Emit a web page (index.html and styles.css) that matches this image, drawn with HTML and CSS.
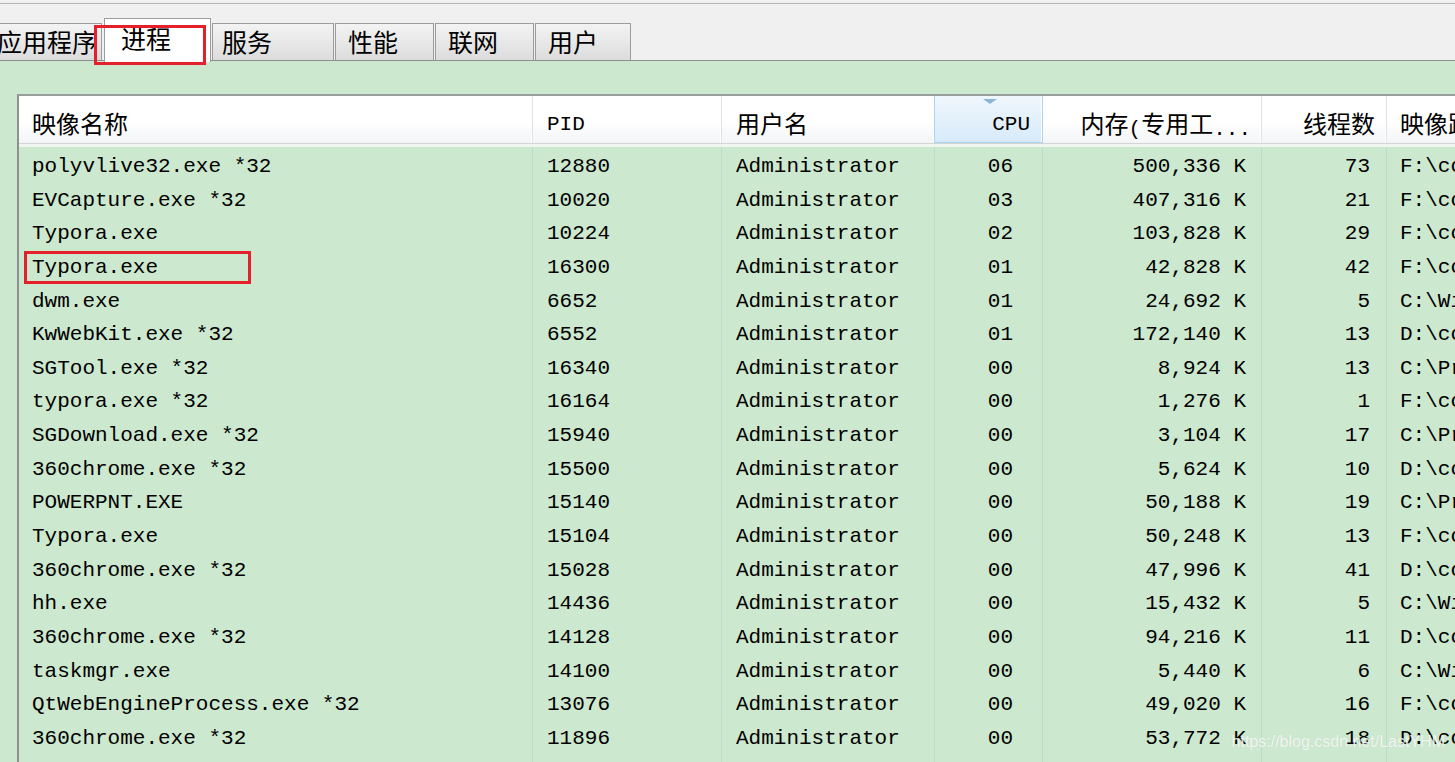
FILE: index.html
```html
<!DOCTYPE html>
<html lang="zh-CN">
<head>
<meta charset="utf-8">
<title>Windows 任务管理器 - 进程</title>
<link rel="stylesheet" href="styles.css">
</head>
<body>
<div class="window">
  <div class="tabbar">
    <div class="tab tab-apps">应用程序</div>
    <div class="tab tab-active">进程</div>
    <div class="tab tab-services">服务</div>
    <div class="tab tab-perf">性能</div>
    <div class="tab tab-net">联网</div>
    <div class="tab tab-users">用户</div>
  </div>
  <div class="panel">
    <div class="list">
      <div class="row head">
        <div class="cell c-name"><span class="cjk">映像名称</span></div>
        <div class="cell c-pid"><span class="lat">PID</span></div>
        <div class="cell c-user"><span class="cjk">用户名</span></div>
        <div class="cell c-cpu sorted"><span class="lat">CPU</span></div>
        <div class="cell c-mem"><span class="cjk">内存</span><span class="lat">(</span><span class="cjk">专用工</span><span class="lat">...</span></div>
        <div class="cell c-thr"><span class="cjk">线程数</span></div>
        <div class="cell c-path"><span class="cjk">映像路径名称</span></div>
      </div>
      <div class="row"><div class="cell c-name">polyvlive32.exe *32</div><div class="cell c-pid">12880</div><div class="cell c-user">Administrator</div><div class="cell c-cpu">06</div><div class="cell c-mem">500,336 K</div><div class="cell c-thr">73</div><div class="cell c-path">F:\codeSoftware\polyv\polyvlive32.exe</div></div>
      <div class="row"><div class="cell c-name">EVCapture.exe *32</div><div class="cell c-pid">10020</div><div class="cell c-user">Administrator</div><div class="cell c-cpu">03</div><div class="cell c-mem">407,316 K</div><div class="cell c-thr">21</div><div class="cell c-path">F:\codeSoftware\EVCapture\EVCapture.exe</div></div>
      <div class="row"><div class="cell c-name">Typora.exe</div><div class="cell c-pid">10224</div><div class="cell c-user">Administrator</div><div class="cell c-cpu">02</div><div class="cell c-mem">103,828 K</div><div class="cell c-thr">29</div><div class="cell c-path">F:\codeSoftware\Typora\Typora.exe</div></div>
      <div class="row marked"><div class="cell c-name">Typora.exe</div><div class="cell c-pid">16300</div><div class="cell c-user">Administrator</div><div class="cell c-cpu">01</div><div class="cell c-mem">42,828 K</div><div class="cell c-thr">42</div><div class="cell c-path">F:\codeSoftware\Typora\Typora.exe</div></div>
      <div class="row"><div class="cell c-name">dwm.exe</div><div class="cell c-pid">6652</div><div class="cell c-user">Administrator</div><div class="cell c-cpu">01</div><div class="cell c-mem">24,692 K</div><div class="cell c-thr">5</div><div class="cell c-path">C:\Windows\System32\dwm.exe</div></div>
      <div class="row"><div class="cell c-name">KwWebKit.exe *32</div><div class="cell c-pid">6552</div><div class="cell c-user">Administrator</div><div class="cell c-cpu">01</div><div class="cell c-mem">172,140 K</div><div class="cell c-thr">13</div><div class="cell c-path">D:\codeSoftware\KwMusic\KwWebKit.exe</div></div>
      <div class="row"><div class="cell c-name">SGTool.exe *32</div><div class="cell c-pid">16340</div><div class="cell c-user">Administrator</div><div class="cell c-cpu">00</div><div class="cell c-mem">8,924 K</div><div class="cell c-thr">13</div><div class="cell c-path">C:\Program Files (x86)\SogouInput\SGTool.exe</div></div>
      <div class="row"><div class="cell c-name">typora.exe *32</div><div class="cell c-pid">16164</div><div class="cell c-user">Administrator</div><div class="cell c-cpu">00</div><div class="cell c-mem">1,276 K</div><div class="cell c-thr">1</div><div class="cell c-path">F:\codeSoftware\Typora\typora.exe</div></div>
      <div class="row"><div class="cell c-name">SGDownload.exe *32</div><div class="cell c-pid">15940</div><div class="cell c-user">Administrator</div><div class="cell c-cpu">00</div><div class="cell c-mem">3,104 K</div><div class="cell c-thr">17</div><div class="cell c-path">C:\Program Files (x86)\SogouInput\SGDownload.exe</div></div>
      <div class="row"><div class="cell c-name">360chrome.exe *32</div><div class="cell c-pid">15500</div><div class="cell c-user">Administrator</div><div class="cell c-cpu">00</div><div class="cell c-mem">5,624 K</div><div class="cell c-thr">10</div><div class="cell c-path">D:\codeSoftware\360Chrome\360chrome.exe</div></div>
      <div class="row"><div class="cell c-name">POWERPNT.EXE</div><div class="cell c-pid">15140</div><div class="cell c-user">Administrator</div><div class="cell c-cpu">00</div><div class="cell c-mem">50,188 K</div><div class="cell c-thr">19</div><div class="cell c-path">C:\Program Files\Microsoft Office\POWERPNT.EXE</div></div>
      <div class="row"><div class="cell c-name">Typora.exe</div><div class="cell c-pid">15104</div><div class="cell c-user">Administrator</div><div class="cell c-cpu">00</div><div class="cell c-mem">50,248 K</div><div class="cell c-thr">13</div><div class="cell c-path">F:\codeSoftware\Typora\Typora.exe</div></div>
      <div class="row"><div class="cell c-name">360chrome.exe *32</div><div class="cell c-pid">15028</div><div class="cell c-user">Administrator</div><div class="cell c-cpu">00</div><div class="cell c-mem">47,996 K</div><div class="cell c-thr">41</div><div class="cell c-path">D:\codeSoftware\360Chrome\360chrome.exe</div></div>
      <div class="row"><div class="cell c-name">hh.exe</div><div class="cell c-pid">14436</div><div class="cell c-user">Administrator</div><div class="cell c-cpu">00</div><div class="cell c-mem">15,432 K</div><div class="cell c-thr">5</div><div class="cell c-path">C:\Windows\hh.exe</div></div>
      <div class="row"><div class="cell c-name">360chrome.exe *32</div><div class="cell c-pid">14128</div><div class="cell c-user">Administrator</div><div class="cell c-cpu">00</div><div class="cell c-mem">94,216 K</div><div class="cell c-thr">11</div><div class="cell c-path">D:\codeSoftware\360Chrome\360chrome.exe</div></div>
      <div class="row"><div class="cell c-name">taskmgr.exe</div><div class="cell c-pid">14100</div><div class="cell c-user">Administrator</div><div class="cell c-cpu">00</div><div class="cell c-mem">5,440 K</div><div class="cell c-thr">6</div><div class="cell c-path">C:\Windows\System32\taskmgr.exe</div></div>
      <div class="row"><div class="cell c-name">QtWebEngineProcess.exe *32</div><div class="cell c-pid">13076</div><div class="cell c-user">Administrator</div><div class="cell c-cpu">00</div><div class="cell c-mem">49,020 K</div><div class="cell c-thr">16</div><div class="cell c-path">F:\codeSoftware\Qt\QtWebEngineProcess.exe</div></div>
      <div class="row"><div class="cell c-name">360chrome.exe *32</div><div class="cell c-pid">11896</div><div class="cell c-user">Administrator</div><div class="cell c-cpu">00</div><div class="cell c-mem">53,772 K</div><div class="cell c-thr">18</div><div class="cell c-path">D:\codeSoftware\360Chrome\360chrome.exe</div></div>
      <div class="row"><div class="cell c-name">360chrome.exe *32</div><div class="cell c-pid">11816</div><div class="cell c-user">Administrator</div><div class="cell c-cpu">00</div><div class="cell c-mem">46,840 K</div><div class="cell c-thr">18</div><div class="cell c-path">D:\codeSoftware\360Chrome\360chrome.exe</div></div>
    </div>
  </div>
  <div class="watermark">https://blog.csdn.net/LastYHM</div>
</div>
</body>
</html>
```
FILE: styles.css
```css
html, body {
  margin: 0;
  padding: 0;
  height: 100%;
  overflow: hidden;
  background: #f0f0f0;
}

.window {
  position: relative;
  height: 762px;
  display: flex;
  flex-direction: column;
  overflow: hidden;
}

/* ---------- tabs ---------- */
.tabbar {
  flex: none;
  margin-top: 3px;
  height: 56px;
  border-top: 1px solid #b4b6bc;
  border-bottom: 1px solid #8e8f90;
  background: #f0f0f0;
  display: flex;
  align-items: flex-end;
  position: relative;
  z-index: 2;
}

.tab {
  box-sizing: border-box;
  height: 37px;
  margin-left: 1px;
  padding-left: 12px;
  border: 1px solid #9b9c9e;
  border-bottom: none;
  background: linear-gradient(#f3f3f3, #e9e9e9 45%, #dcdcdc);
  font-family: "Noto Sans CJK SC", "Noto Sans", sans-serif;
  font-size: 25px;
  line-height: 35px;
  color: #000;
  white-space: nowrap;
  overflow: hidden;
}

.tab-apps { width: 118px; margin-left: -16px; }
.tab-active {
  position: relative;
  width: 107px;
  height: 44px;
  margin-left: 2px;
  margin-bottom: -2px;
  padding-left: 16px;
  background: #ffffff;
  line-height: 38px;
  overflow: visible;
}
.tab-active::after {
  content: "";
  position: absolute;
  left: -11px;
  top: 6px;
  width: 112px;
  height: 40px;
  box-sizing: border-box;
  border: 3px solid #e5202b;
}
.tab-services { width: 122px; padding-left: 9px; }
.tab-perf { width: 99px; }
.tab-net { width: 99px; }
.tab-users { width: 96px; }

/* ---------- panel & list ---------- */
.panel {
  flex: 1;
  background: #cce8cf;
  padding: 33px 0 0 17px;
  min-height: 0;
  overflow: hidden;
}

.list {
  height: 100%;
  border-top: 2px solid #9a9e9c;
  border-left: 2px solid #8d9190;
  width: 1600px;
  overflow: hidden;
}

.row {
  display: grid;
  grid-template-columns: 514px 189px 213px 108px 219px 125px 432px;
  height: 33.65px;
  position: relative;
  font-family: "Liberation Mono", "Noto Sans CJK SC", monospace;
  font-size: 21px;
  line-height: 33.65px;
  color: #000;
}

.cell {
  box-sizing: border-box;
  border-right: 1px solid #bcdbca;
  white-space: nowrap;
  overflow: hidden;
  padding-top: 3px;
}

.c-name { padding-left: 13px; }
.c-pid { padding-left: 14px; }
.c-user { padding-left: 14px; }
.c-cpu { text-align: right; padding-right: 29px; }
.c-mem { text-align: right; padding-right: 15px; }
.c-thr { text-align: right; padding-right: 16px; }
.c-path { padding-left: 13px; border-right: none; }

.row.marked::after {
  content: "";
  position: absolute;
  left: 5px;
  top: 3px;
  width: 227px;
  height: 33px;
  box-sizing: border-box;
  border: 3px solid #e5202b;
}

/* ---------- header ---------- */
.row.head {
  height: 47px;
  line-height: 47px;
  border-bottom: 1px solid #d3d5d4;
  margin-bottom: 3px;
  box-shadow: 0 3px 0 #eef6ef;
  background: linear-gradient(#ffffff, #ffffff 55%, #f3f4f6);
}

.head .cell {
  border-right: 1px solid #e1e2e4;
  box-shadow: inset -1px 0 0 #ffffff;
  padding-top: 3px;
}

.head .c-cpu { padding-right: 12px; }
.head .c-mem { padding-right: 10px; }
.head .c-thr { padding-right: 11px; }
.head .c-path { border-right: none; }

.head .sorted {
  position: relative;
  background: linear-gradient(#f0f7fd, #e3f0fb 50%, #d8eaf9);
  border-left: 1px solid #a9d3f1;
  border-right: 1px solid #a9d3f1;
  border-bottom: 1px solid #a9d3f1;
  margin-left: -1px;
}
.head .sorted::before {
  content: "";
  position: absolute;
  left: 48px;
  top: 3px;
  width: 0;
  height: 0;
  border-left: 7px solid transparent;
  border-right: 7px solid transparent;
  border-top: 5px solid #88b6d9;
}

.cjk {
  font-family: "Noto Sans CJK SC", sans-serif;
  font-size: 24px;
}
.lat {
  font-family: "Liberation Mono", monospace;
  font-size: 21px;
  position: relative;
  top: 2px;
}

/* ---------- watermark ---------- */
.watermark {
  position: absolute;
  right: 10px;
  bottom: 11px;
  font-family: "Liberation Sans", Arial, sans-serif;
  font-size: 16px;
  color: rgba(255, 255, 255, 0.78);
  text-shadow: 0 0 1px rgba(180, 200, 185, 0.6);
}
```
